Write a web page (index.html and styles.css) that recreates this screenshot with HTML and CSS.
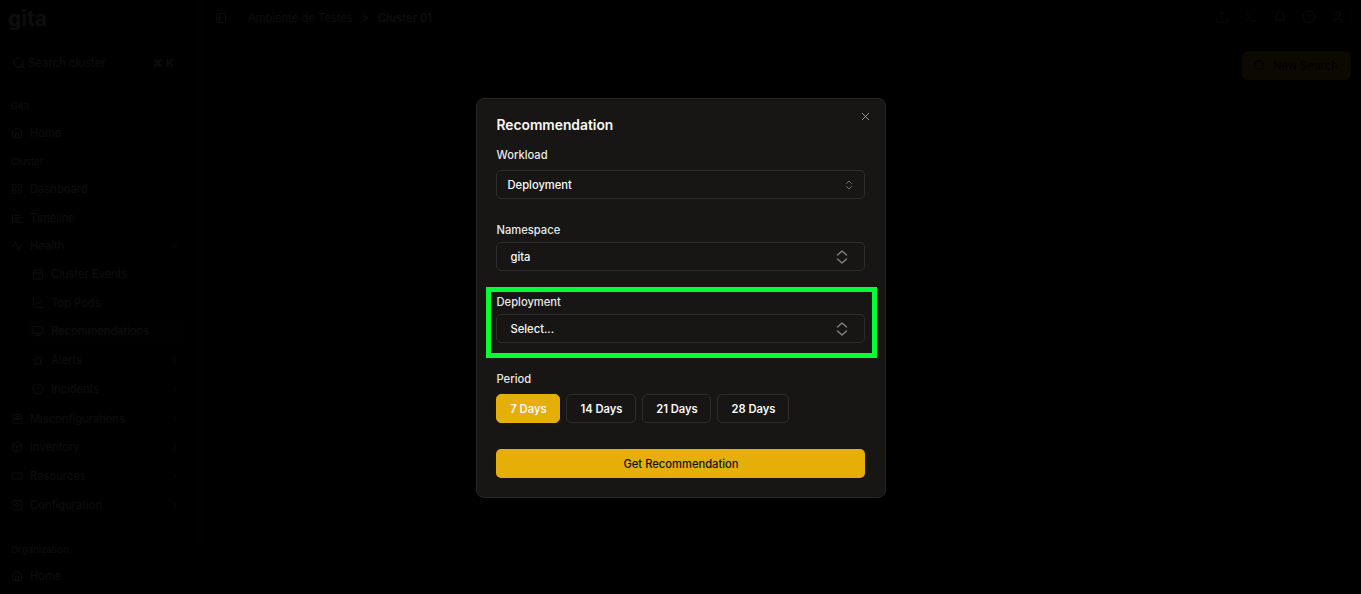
FILE: index.html
```html
<!DOCTYPE html>
<html lang="en">
<head>
    <meta charset="UTF-8">
    <meta name="viewport" content="width=device-width, initial-scale=1.0">
    <title>Recommendation</title>
    <link rel="stylesheet" href="styles.css">
</head>
<body>
    <svg class="icon-defs" aria-hidden="true">
        <symbol id="i-search" viewBox="0 0 24 24"><circle cx="11" cy="11" r="8"/><path d="m21 21-4.3-4.3"/></symbol>
        <symbol id="i-home" viewBox="0 0 24 24"><path d="M15 21v-8a1 1 0 0 0-1-1h-4a1 1 0 0 0-1 1v8"/><path d="M3 10a2 2 0 0 1 .7-1.5l7-6a2 2 0 0 1 2.6 0l7 6A2 2 0 0 1 21 10v9a2 2 0 0 1-2 2H5a2 2 0 0 1-2-2z"/></symbol>
        <symbol id="i-grid" viewBox="0 0 24 24"><rect x="3" y="3" width="7" height="7" rx="1"/><rect x="14" y="3" width="7" height="7" rx="1"/><rect x="14" y="14" width="7" height="7" rx="1"/><rect x="3" y="14" width="7" height="7" rx="1"/></symbol>
        <symbol id="i-timeline" viewBox="0 0 24 24"><path d="M3 3v16a2 2 0 0 0 2 2h16"/><path d="M7 7h10M7 12h13M7 17h7"/></symbol>
        <symbol id="i-pulse" viewBox="0 0 24 24"><path d="M22 12h-4l-3 9L9 3l-3 9H2"/></symbol>
        <symbol id="i-calendar" viewBox="0 0 24 24"><rect x="3" y="4" width="18" height="18" rx="2"/><path d="M8 2v4M16 2v4M3 10h18M8 14h.01M12 14h.01M16 14h.01M8 18h.01M12 18h.01M16 18h.01"/></symbol>
        <symbol id="i-chart" viewBox="0 0 24 24"><path d="M3 3v16a2 2 0 0 0 2 2h16"/><path d="m7 15 4-5 3 3 5-6"/></symbol>
        <symbol id="i-monitor" viewBox="0 0 24 24"><rect x="2" y="3" width="20" height="14" rx="2"/><path d="M8 21h8M12 17v4"/></symbol>
        <symbol id="i-siren" viewBox="0 0 24 24"><path d="M7 18v-6a5 5 0 1 1 10 0v6"/><path d="M5 21a2 2 0 0 1 2-3h10a2 2 0 0 1 2 3z"/><path d="M21 12h1M18.5 4.5 18 5M2 12h1M12 2v1M4.9 4.9l.7.7"/></symbol>
        <symbol id="i-alert" viewBox="0 0 24 24"><circle cx="12" cy="12" r="10"/><path d="M12 8v4M12 16h.01"/></symbol>
        <symbol id="i-wrench" viewBox="0 0 24 24"><rect x="3" y="3" width="18" height="8" rx="3"/><rect x="3" y="13" width="18" height="8" rx="2"/><path d="M8 17h.01M12 7h5"/></symbol>
        <symbol id="i-box" viewBox="0 0 24 24"><path d="M21 8a2 2 0 0 0-1-1.7l-7-4a2 2 0 0 0-2 0l-7 4A2 2 0 0 0 3 8v8a2 2 0 0 0 1 1.7l7 4a2 2 0 0 0 2 0l7-4a2 2 0 0 0 1-1.7z"/><path d="m3.3 7 8.7 5 8.7-5M12 22V12"/></symbol>
        <symbol id="i-card" viewBox="0 0 24 24"><rect x="2" y="6" width="20" height="12" rx="2"/><path d="M7 12h.01M12 12h.01M17 12h.01"/></symbol>
        <symbol id="i-config" viewBox="0 0 24 24"><path d="M3 8V5a2 2 0 0 1 2-2h14a2 2 0 0 1 2 2v3M3 16v3a2 2 0 0 0 2 2h14a2 2 0 0 0 2-2v-3"/><circle cx="12" cy="12" r="3"/><path d="M2 12h7M15 12h7"/></symbol>
        <symbol id="i-chevron-right" viewBox="0 0 24 24"><path d="m9 18 6-6-6-6"/></symbol>
        <symbol id="i-chevron-down" viewBox="0 0 24 24"><path d="m6 9 6 6 6-6"/></symbol>
        <symbol id="i-panel" viewBox="0 0 24 24"><rect x="3" y="3" width="18" height="18" rx="2"/><path d="M9 3v18"/></symbol>
        <symbol id="i-upload" viewBox="0 0 24 24"><path d="M12 3v12M7 8l5-5 5 5M3 15v4a2 2 0 0 0 2 2h14a2 2 0 0 0 2-2v-4"/></symbol>
        <symbol id="i-terminal" viewBox="0 0 24 24"><path d="m4 17 6-6-6-6M12 19h8"/></symbol>
        <symbol id="i-bell" viewBox="0 0 24 24"><path d="M6 8a6 6 0 0 1 12 0c0 7 3 9 3 9H3s3-2 3-9"/><path d="M10.3 21a1.9 1.9 0 0 0 3.4 0"/></symbol>
        <symbol id="i-help" viewBox="0 0 24 24"><circle cx="12" cy="12" r="10"/><path d="M9.1 9a3 3 0 0 1 5.8 1c0 2-3 3-3 3M12 17h.01"/></symbol>
        <symbol id="i-user" viewBox="0 0 24 24"><circle cx="12" cy="7" r="4"/><path d="M19 21v-2a4 4 0 0 0-4-4H9a4 4 0 0 0-4 4v2"/></symbol>
        <symbol id="i-updown" viewBox="0 0 24 24"><path d="m7 15 5 5 5-5M7 9l5-5 5 5"/></symbol>
        <symbol id="i-selector" viewBox="0 0 16 16"><path d="M3.5 6 8 2l4.5 4M3.5 10 8 14l4.5-4"/></symbol>
        <symbol id="i-close" viewBox="0 0 24 24"><path d="M18 6 6 18M6 6l12 12"/></symbol>
    </svg>

    <div class="app">
        <aside class="sidebar">
            <div class="logo">gita</div>
            <div class="search">
                <svg class="icon"><use href="#i-search"/></svg>
                <span class="search-text">Search cluster</span>
                <span class="search-key">⌘ K</span>
            </div>

            <div class="nav-title nav-title-first">Gita</div>
            <a class="nav-item"><svg class="icon"><use href="#i-home"/></svg>Home</a>

            <div class="nav-title">Cluster</div>
            <a class="nav-item"><svg class="icon"><use href="#i-grid"/></svg>Dashboard</a>
            <a class="nav-item"><svg class="icon"><use href="#i-timeline"/></svg>Timeline</a>
            <a class="nav-item"><svg class="icon"><use href="#i-pulse"/></svg>Health<svg class="icon chevron"><use href="#i-chevron-down"/></svg></a>
            <div class="nav-sub-list">
                <a class="nav-item nav-sub"><svg class="icon"><use href="#i-calendar"/></svg>Cluster Events</a>
                <a class="nav-item nav-sub"><svg class="icon"><use href="#i-chart"/></svg>Top Pods</a>
                <a class="nav-item nav-sub nav-active"><svg class="icon"><use href="#i-monitor"/></svg>Recommendations</a>
                <a class="nav-item nav-sub"><svg class="icon"><use href="#i-siren"/></svg>Alerts<svg class="icon chevron"><use href="#i-chevron-right"/></svg></a>
                <a class="nav-item nav-sub"><svg class="icon"><use href="#i-alert"/></svg>Incidents<svg class="icon chevron"><use href="#i-chevron-right"/></svg></a>
            </div>
            <a class="nav-item"><svg class="icon"><use href="#i-wrench"/></svg>Misconfigurations<svg class="icon chevron"><use href="#i-chevron-right"/></svg></a>
            <a class="nav-item"><svg class="icon"><use href="#i-box"/></svg>Inventory<svg class="icon chevron"><use href="#i-chevron-right"/></svg></a>
            <a class="nav-item"><svg class="icon"><use href="#i-card"/></svg>Resources<svg class="icon chevron"><use href="#i-chevron-right"/></svg></a>
            <a class="nav-item"><svg class="icon"><use href="#i-config"/></svg>Configuration<svg class="icon chevron"><use href="#i-chevron-right"/></svg></a>

            <div class="nav-title nav-title-org">Organization</div>
            <a class="nav-item"><svg class="icon"><use href="#i-home"/></svg>Home</a>
        </aside>
        <div class="rail"></div>

        <main class="main">
            <header class="topbar">
                <svg class="icon"><use href="#i-panel"/></svg>
                <span class="crumb">Ambiente de Testes</span>
                <span class="crumb-sep">&gt;</span>
                <span class="crumb crumb-current">Cluster 01</span>
                <div class="topbar-actions">
                    <svg class="icon"><use href="#i-upload"/></svg>
                    <svg class="icon"><use href="#i-terminal"/></svg>
                    <svg class="icon"><use href="#i-bell"/></svg>
                    <svg class="icon"><use href="#i-help"/></svg>
                    <span class="user-btn"><svg class="icon"><use href="#i-user"/></svg></span>
                </div>
            </header>
            <div class="toolbar">
                <button class="new-search"><svg class="icon"><use href="#i-search"/></svg>New Search</button>
            </div>
        </main>
    </div>

    <div class="overlay">
        <div class="modal">
            <button class="modal-close"><svg class="icon"><use href="#i-close"/></svg></button>
            <h2 class="modal-title">Recommendation</h2>

            <div class="field field-workload">
                <label class="field-label">Workload</label>
                <div class="select select-native">
                    <span>Deployment</span>
                    <svg class="icon"><use href="#i-updown"/></svg>
                </div>
            </div>

            <div class="field field-namespace">
                <label class="field-label">Namespace</label>
                <div class="select">
                    <span>gita</span>
                    <svg class="icon"><use href="#i-selector"/></svg>
                </div>
            </div>

            <div class="field field-deployment">
                <div class="highlight"></div>
                <label class="field-label">Deployment</label>
                <div class="select">
                    <span>Select...</span>
                    <svg class="icon"><use href="#i-selector"/></svg>
                </div>
            </div>

            <div class="field field-period">
                <label class="field-label">Period</label>
                <div class="periods">
                    <button class="period period-active">7 Days</button>
                    <button class="period">14 Days</button>
                    <button class="period">21 Days</button>
                    <button class="period">28 Days</button>
                </div>
            </div>

            <button class="submit">Get Recommendation</button>
        </div>
    </div>
</body>
</html>
```

FILE: styles.css
```css
* {
    box-sizing: border-box;
}
body {
    font-family: Inter, "Liberation Sans", sans-serif;
    margin: 0;
    height: 100vh;
    overflow: hidden;
    background-color: #000;
    color: #fafafa;
}
button {
    font-family: inherit;
    cursor: pointer;
}
.icon-defs {
    display: none;
}
.icon {
    width: 16px;
    height: 16px;
    flex: none;
    fill: none;
    stroke: currentColor;
    stroke-width: 2;
    stroke-linecap: round;
    stroke-linejoin: round;
}

/* page behind the dialog */
.app {
    display: flex;
    height: 100vh;
    color: #eee;
}
.sidebar {
    width: 195px;
    flex: none;
    padding: 5px 12px 0 11px;
    overflow: hidden;
    font-size: 11.2px;
}
.rail {
    width: 8px;
    height: 545px;
    flex: none;
    background-color: #222;
}
.logo {
    margin-left: -3px;
    font-size: 21px;
    font-weight: 700;
    line-height: 28px;
}
.search {
    display: flex;
    align-items: center;
    gap: 2px;
    height: 20px;
    margin: 20px 9px 0 1px;
}
.search .icon {
    width: 14px;
    height: 14px;
}
.search-text {
    flex: 1;
    font-size: 11.4px;
}
.search-key {
    font-size: 11px;
    font-weight: 700;
}
.nav-title {
    font-size: 9.6px;
    height: 18px;
    line-height: 18px;
    margin-top: 5px;
    margin-bottom: 4px;
}
.nav-title-first {
    margin-top: 24px;
}
.nav-title-org {
    margin-top: 22px;
    margin-bottom: 3px;
}
.nav-item {
    display: flex;
    align-items: center;
    gap: 7px;
    height: 28.7px;
}
.nav-item .icon {
    width: 12px;
    height: 12px;
}
.nav-item .chevron {
    margin-left: auto;
    margin-right: 3px;
    width: 10px;
    height: 10px;
}
.nav-sub-list {
    margin: -1px 0 1px;
}
.nav-sub {
    margin-left: 15px;
    padding-left: 6px;
}
.nav-active {
    height: 23.7px;
    margin-top: 2px;
    margin-bottom: 3px;
    border-radius: 4px;
    background-color: #222;
}
.main {
    flex: 1;
    min-width: 0;
}
.topbar {
    display: flex;
    align-items: center;
    height: 36px;
    padding: 0 10px 0 12px;
    font-size: 11.2px;
}
.topbar > .icon {
    width: 12px;
    height: 12px;
    margin-right: 21px;
}
.crumb-sep {
    margin: 0 9px;
}
.crumb-current {
    font-weight: 600;
}
.topbar-actions {
    display: flex;
    align-items: center;
    gap: 15px;
    margin-left: auto;
    margin-top: -2px;
}
.topbar-actions .icon {
    display: block;
    width: 14px;
    height: 14px;
    stroke-width: 1.5;
}
.user-btn {
    padding: 3px 5px 3px 0;
    border-right: 1px solid #555;
}
.toolbar {
    display: flex;
    justify-content: flex-end;
    padding: 15px 10px 0 0;
}
.new-search {
    display: flex;
    align-items: center;
    gap: 7px;
    width: 109px;
    height: 29px;
    padding: 0 0 0 11px;
    border: 0;
    border-radius: 6px;
    background-color: #e5af08;
    color: #000;
    font-size: 11.2px;
    font-weight: 500;
}
.new-search .icon {
    width: 13px;
    height: 13px;
}

/* dialog */
.overlay {
    position: fixed;
    inset: 0;
    display: flex;
    align-items: center;
    justify-content: center;
    padding-top: 2px;
    background-color: rgba(0, 0, 0, 0.95);
}
.modal {
    position: relative;
    width: 410px;
    height: 400px;
    padding: 18px 20px 0 19px;
    border: 1px solid #262626;
    border-radius: 8px;
    background-color: #171615;
}
.modal-close {
    position: absolute;
    top: 11px;
    right: 13px;
    display: flex;
    padding: 0;
    border: 0;
    background: none;
    color: #b0b0b0;
}
.modal-close .icon {
    width: 13px;
    height: 13px;
    stroke-width: 1.5;
}
.modal-title {
    margin: 0;
    padding-left: 1px;
    font-size: 13.8px;
    font-weight: 600;
    line-height: 16px;
}
.field {
    position: relative;
}
.field-label {
    display: block;
    padding-left: 1px;
    font-size: 11.2px;
    font-weight: 500;
    line-height: 14px;
    color: #e8e8e8;
}
.field-workload {
    margin-top: 15px;
}
.field-workload .select {
    margin-top: 8px;
}
.field-namespace {
    margin-top: 24px;
}
.field-deployment {
    margin-top: 24px;
}
.field-period {
    margin-top: 29px;
}
.select {
    display: flex;
    align-items: center;
    justify-content: space-between;
    height: 29px;
    margin-top: 5px;
    padding: 0 14px 0 14px;
    border: 1px solid #2e2d2c;
    border-radius: 5px;
    font-size: 11.2px;
    font-weight: 500;
}
.select .icon {
    color: #808080;
    stroke-width: 1.4;
}
.select-native {
    padding: 0 9px 0 11px;
}
.select-native .icon {
    width: 12px;
    height: 12px;
    stroke-width: 1.6;
}
.highlight {
    position: absolute;
    top: -8px;
    left: -10px;
    width: 391px;
    height: 71px;
    border: 5px solid #00ff33;
}
.periods {
    display: flex;
    gap: 6px;
    margin-top: 8px;
}
.period {
    width: 70px;
    height: 29px;
    padding: 0 0 0 2px;
    border: 1px solid #2e2d2c;
    border-radius: 5px;
    background: none;
    color: #fafafa;
    font-size: 11.2px;
    font-weight: 600;
}
.period:nth-child(3) {
    width: 69px;
}
.period:nth-child(4) {
    width: 72px;
}
.period-active {
    width: 64px;
    background-color: #e5af08;
    border-color: #e5af08;
}
.submit {
    display: block;
    width: 369px;
    height: 29px;
    margin-top: 26px;
    padding: 0 0 0 2px;
    border: 0;
    border-radius: 5px;
    background-color: #e5af08;
    color: #111;
    font-size: 11.2px;
    font-weight: 500;
}
```
